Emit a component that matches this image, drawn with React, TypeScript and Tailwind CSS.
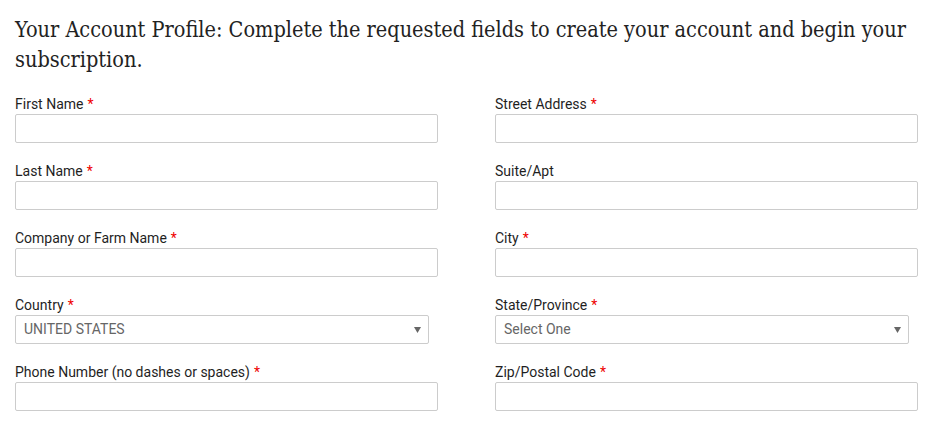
import React from 'react';

type Field = { label: string; required?: boolean; select?: string };

const leftFields: Field[] = [
  { label: 'First Name', required: true },
  { label: 'Last Name', required: true },
  { label: 'Company or Farm Name', required: true },
  { label: 'Country', required: true, select: 'UNITED STATES' },
  { label: 'Phone Number (no dashes or spaces)', required: true },
];

const rightFields: Field[] = [
  { label: 'Street Address', required: true },
  { label: 'Suite/Apt' },
  { label: 'City', required: true },
  { label: 'State/Province', required: true, select: 'Select One' },
  { label: 'Zip/Postal Code', required: true },
];

function FormField({ field }: { field: Field }) {
  return (
    <div className="mb-[18px]">
      <label className="block h-5 text-[14px] leading-5 font-normal text-[#1f1f1f]">
        {field.label}
        {field.required && <span className="text-[#e00] ml-1">*</span>}
      </label>
      {field.select ? (
        <div className="flex items-center justify-between w-[414px] h-[29px] border border-[#ccc] rounded-[2px] bg-white pl-2 pr-[7px]">
          <span className="text-[14px] text-[#666]">{field.select}</span>
          <svg width="7" height="6" viewBox="0 0 7 6">
            <path d="M0 0h7L3.5 6z" fill="#666" />
          </svg>
        </div>
      ) : (
        <input type="text" className="block w-full h-[29px] border border-[#ccc] rounded-[2px] bg-white outline-none" />
      )}
    </div>
  );
}

export default function App() {
  return (
    <div className="min-h-screen bg-white pl-[15px] pr-4 pt-[15px] font-['Roboto',sans-serif]">
      <h1 className="text-[21.5px] leading-[30px] text-[#222] font-['DejaVu_Serif_Condensed','DejaVu_Serif',serif] mb-[19px]">
        Your Account Profile: Complete the requested fields to create your account and begin your subscription.
      </h1>
      <div className="grid grid-cols-2 gap-x-[57px]">
        <div>
          {leftFields.map((f) => (
            <FormField key={f.label} field={f} />
          ))}
        </div>
        <div>
          {rightFields.map((f) => (
            <FormField key={f.label} field={f} />
          ))}
        </div>
      </div>
    </div>
  );
}
